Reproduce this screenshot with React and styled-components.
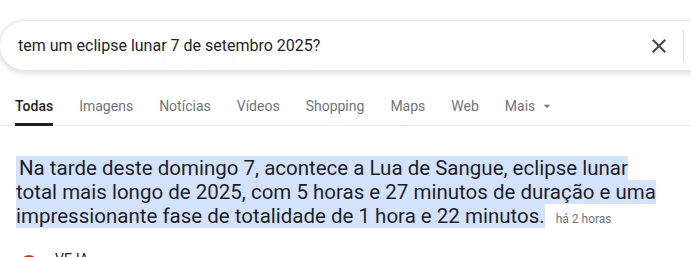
import React from 'react'
import styled, { createGlobalStyle } from 'styled-components'

const GlobalStyle = createGlobalStyle`
  body {
    margin: 0;
    background: #fff;
    font-family: Roboto, "Liberation Sans", Arial, sans-serif;
    overflow: hidden;
  }
`

const Page = styled.div`
  padding-top: 20px;
  width: 691px;
`

const SearchBar = styled.div`
  box-sizing: border-box;
  margin-left: -1px;
  width: 760px;
  height: 51px;
  display: flex;
  align-items: center;
  padding-left: 18px;
  border: 1px solid #e3e3e3;
  border-radius: 26px;
  background: #fff;
  box-shadow: 0 2px 5px 1px rgba(64, 60, 67, 0.14);
`

const Query = styled.div`
  flex: 1;
  font-size: 16px;
  color: #1f1f1f;
`

const ClearButton = styled.div`
  width: 24px;
  height: 24px;
  margin-right: 12px;
  display: flex;
  color: #474747;
`

const Divider = styled.div`
  width: 1px;
  height: 32px;
  background: #dadce0;
`

const Actions = styled.div`
  width: 74px;
  flex: none;
`

const TabsBar = styled.nav`
  margin-top: 25px;
  display: flex;
  gap: 26px;
  padding-left: 15px;
  border-bottom: 1px solid #ebebeb;
`

const Tab = styled.div`
  display: flex;
  align-items: center;
  font-size: 14px;
  line-height: 20px;
  padding-bottom: 7px;
  border-bottom: 3px solid ${p => (p.$active ? '#1f1f1f' : 'transparent')};
  color: ${p => (p.$active ? '#1f1f1f' : '#70757a')};
  font-weight: ${p => (p.$active ? 500 : 400)};
  margin-bottom: -1px;
`

const Caret = styled.svg`
  width: 16px;
  height: 16px;
  margin-left: 4px;
  fill: #70757a;
`

const Snippet = styled.p`
  margin: 30px 0 0 16px;
  width: 672px;
  font-size: 20.5px;
  line-height: 24px;
  color: #1f1f1f;
`

const Mark = styled.span`
  background: #d3e3fd;
  padding: 0 0 0 3px;
`

const Age = styled.span`
  margin-left: 11px;
  font-size: 12px;
  color: #70757a;
`

const SourceRow = styled.div`
  margin-top: 18px;
  display: flex;
  align-items: flex-start;
  gap: 17px;
  padding-left: 20px;
`

const Favicon = styled.div`
  width: 18px;
  height: 18px;
  margin-top: 6px;
  border-radius: 50%;
  background: #e1251b;
`

const SourceName = styled.div`
  font-size: 14px;
  line-height: 20px;
  color: #202124;
`

const tabs = ['Todas', 'Imagens', 'Notícias', 'Vídeos', 'Shopping', 'Maps', 'Web']

export default function App() {
  return (
    <Page>
      <GlobalStyle />
      <SearchBar>
        <Query>tem um eclipse lunar 7 de setembro 2025?</Query>
        <ClearButton>
          <svg viewBox="0 0 24 24" width="24" height="24" fill="currentColor">
            <path d="M19 6.41L17.59 5 12 10.59 6.41 5 5 6.41 10.59 12 5 17.59 6.41 19 12 13.41 17.59 19 19 17.59 13.41 12z" />
          </svg>
        </ClearButton>
        <Divider />
        <Actions />
      </SearchBar>

      <TabsBar>
        {tabs.map((t, i) => (
          <Tab key={t} $active={i === 0}>{t}</Tab>
        ))}
        <Tab>
          Mais
          <Caret viewBox="0 0 24 24">
            <path d="M7 10l5 5 5-5z" />
          </Caret>
        </Tab>
      </TabsBar>

      <Snippet>
        <Mark>
          Na tarde deste domingo 7, acontece a Lua de Sangue, eclipse lunar<br />
          total mais longo de 2025, com 5 horas e 27 minutos de duração e uma<br />
          impressionante fase de totalidade de 1 hora e 22 minutos.
        </Mark>
        <Age>há 2 horas</Age>
      </Snippet>

      <SourceRow>
        <Favicon />
        <SourceName>VEJA</SourceName>
      </SourceRow>
    </Page>
  )
}
